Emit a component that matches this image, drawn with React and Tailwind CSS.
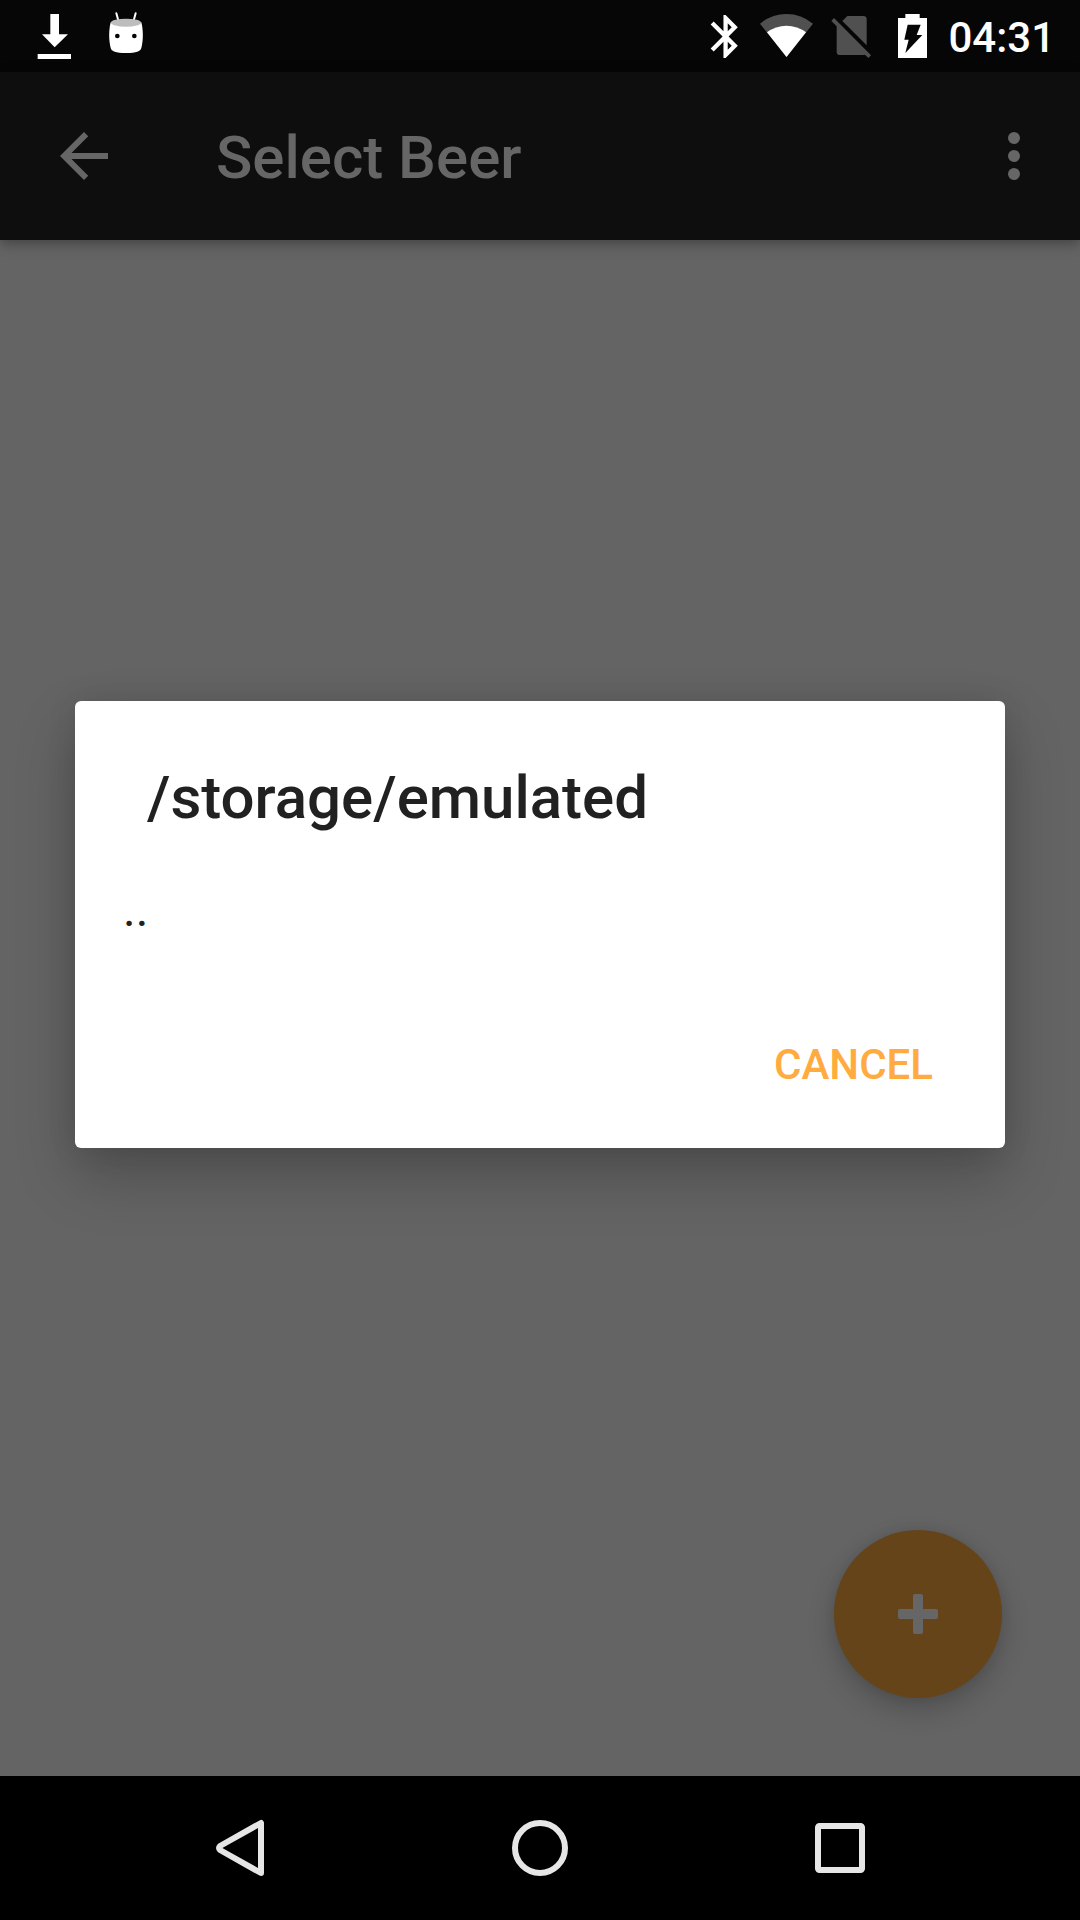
const statusIcon = "h-[72px] w-[62px] shrink-0";

function StatusBar() {
  return (
    <header className="flex h-[72px] items-center bg-[#060606] pr-[25px] pl-[18px] text-white">
      <svg className="size-[72px]" viewBox="54 0 216 216" fill="#fff" role="img" aria-label="Download complete">
        <path d="M151 42h26v61h27l-40 39-38-39h25z" />
        <path d="M113 162h100v15H113z" />
      </svg>
      <svg className="size-[72px]" viewBox="270 0 216 216" role="img" aria-label="Debug notification">
        <path d="M349 40l7 25M407 40l-7 25" stroke="#fff" strokeWidth="6" strokeLinecap="round" />
        <path d="M332 67c-6 24-6 54 0 77 3 10 14 15 46 15s43-5 46-15c6-23 6-53 0-77z" fill="#fff" />
        <ellipse cx="378" cy="68" rx="45" ry="12" fill="#bdbdbd" />
        <circle cx="352" cy="108" r="7" fill="#060606" />
        <circle cx="403" cy="108" r="7" fill="#060606" />
      </svg>
      <div className="ml-auto flex items-center">
        <svg className={statusIcon} viewBox="15 0 186 216" fill="#fff" role="img" aria-label="Bluetooth">
          <path
            transform="translate(33 32) scale(6.4 6.45)"
            d="M17.71 7.71L12 2h-1v7.59L6.41 5 5 6.41 10.59 12 5 17.59 6.41 19 11 14.41V22h1l5.71-5.71-4.3-4.29 4.3-4.29zM13 5.83l1.88 1.88L13 9.59V5.83zm1.88 10.46L13 18.17v-3.76l1.88 1.88z"
          />
        </svg>
        <svg className={statusIcon} viewBox="201 0 186 216" role="img" aria-label="Wi-Fi">
          <path d="M292.500 171L213 71Q248 42 292.500 42T372 71z" fill="#505050" />
          <path d="M292.500 171L234 97Q260 77 292.500 77T351 97z" fill="#fff" />
        </svg>
        <svg className={statusIcon} viewBox="387 0 186 216" fill="#505050" role="img" aria-label="No SIM card">
          <path d="M460 63L475 48H523Q533 48 533 58V136z" />
          <path d="M435 54L546 166 538 174 528 164Q526 165 522 165H453Q443 165 443 155V79L427 63z" />
        </svg>
        <svg className={statusIcon} viewBox="573 0 186 216" role="img" aria-label="Battery charging">
          <path d="M649 42h43v12h22v120h-87V54h22z" fill="#fff" />
          <path d="M656 74h39l-12 31h17l-51 54 10-40h-13z" fill="#060606" />
        </svg>
        <time className="ml-1.5 pt-1 text-[42px] leading-[48px] font-medium">04:31</time>
      </div>
    </header>
  );
}

function AppBar() {
  return (
    <div className="relative flex h-[168px] items-center bg-[#0e0e0e] pr-[30px] pl-12 text-[#666666] shadow-[0_4px_12px_rgba(0,0,0,0.32)]">
      <button type="button" aria-label="Back">
        <svg className="size-[72px]" viewBox="0 0 24 24" fill="currentColor">
          <path d="M20 11H7.830l5.590-5.590L12 4l-8 8 8 8 1.410-1.410L7.830 13H20v-2z" />
        </svg>
      </button>
      <h1 className="ml-24 pt-1 text-[60px] leading-[72px] font-medium">Select Beer</h1>
      <button type="button" aria-label="More options" className="ml-auto">
        <svg className="size-[72px]" viewBox="0 0 24 24" fill="currentColor">
          <circle cx="12" cy="6" r="2" />
          <circle cx="12" cy="12" r="2" />
          <circle cx="12" cy="18" r="2" />
        </svg>
      </button>
    </div>
  );
}

function FolderDialog() {
  return (
    <div className="absolute inset-0 flex items-center px-[75px]">
      <section
        role="dialog"
        aria-labelledby="folder-title"
        className="w-full rounded-md bg-white pt-[61px] pb-[30px] text-[#212121] shadow-[0_28px_60px_rgba(0,0,0,0.23),0_0_30px_rgba(0,0,0,0.1)]"
      >
        <h2 id="folder-title" className="px-[72px] text-[60px] leading-[72px] font-medium">
          /storage/emulated
        </h2>
        <ul className="mt-1">
          <li>
            <button type="button" className="flex h-36 w-full items-center px-12 text-[48px] leading-[56px]">
              ..
            </button>
          </li>
        </ul>
        <div className="mt-7 flex justify-end px-12">
          <button type="button" className="h-[108px] px-6 pt-0.5 text-[42px] leading-[48px] font-medium text-[#ffab40]">
            CANCEL
          </button>
        </div>
      </section>
    </div>
  );
}

function NavigationBar() {
  const key = "flex flex-1 items-center justify-center";
  return (
    <nav className="flex h-36 bg-black px-[90px]">
      <button type="button" aria-label="Back" className={key}>
        <svg className="size-[72px]" viewBox="0 0 72 72" fill="none" stroke="#e6e6e6" strokeWidth="6" strokeLinejoin="round">
          <path d="M57 11V61L16 38Q14 36 16 34z" />
        </svg>
      </button>
      <button type="button" aria-label="Home" className={key}>
        <svg className="size-[72px]" viewBox="0 0 72 72" fill="none" stroke="#e6e6e6" strokeWidth="6">
          <circle cx="36" cy="36" r="25" />
        </svg>
      </button>
      <button type="button" aria-label="Recent apps" className={key}>
        <svg className="size-[72px]" viewBox="0 0 72 72" fill="none" stroke="#e6e6e6" strokeWidth="6">
          <rect x="14" y="14" width="44" height="44" rx="1.5" />
        </svg>
      </button>
    </nav>
  );
}

export default function App() {
  return (
    <div className="flex min-h-screen flex-col bg-[#646464] font-['Roboto',sans-serif]">
      <StatusBar />
      <div className="relative flex flex-1 flex-col">
        <AppBar />
        <main className="flex flex-1 items-end justify-end p-[78px]">
          <button
            type="button"
            aria-label="Add beer"
            className="flex size-[168px] items-center justify-center rounded-full bg-[#654419] shadow-[0_12px_28px_rgba(0,0,0,0.2),0_0_12px_rgba(0,0,0,0.08)]"
          >
            <svg className="size-[72px]" viewBox="0 0 72 72" fill="#666666">
              <rect x="16" y="31" width="40" height="10" rx="2" />
              <rect x="31" y="16" width="10" height="40" rx="2" />
            </svg>
          </button>
        </main>
        <FolderDialog />
      </div>
      <NavigationBar />
    </div>
  );
}
